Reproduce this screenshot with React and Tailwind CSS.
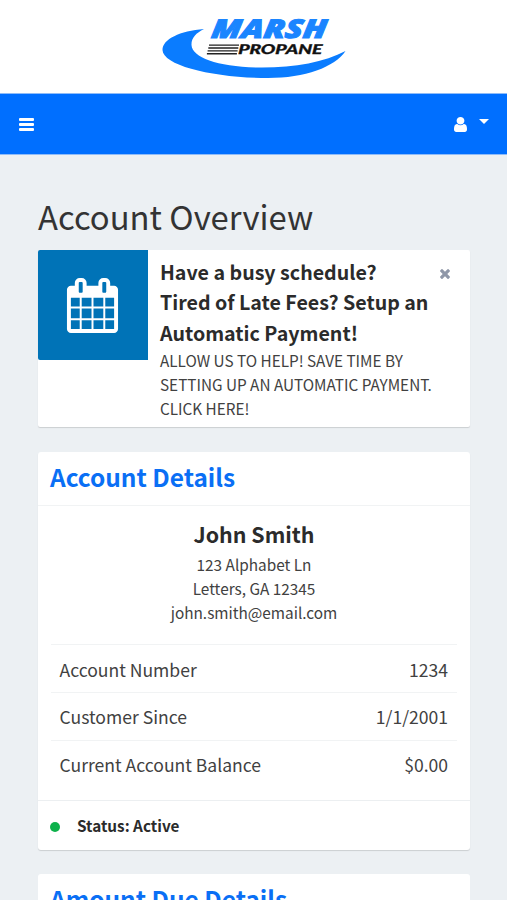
import React from 'react'

const DETAILS = [
  { label: 'Account Number', value: '1234' },
  { label: 'Customer Since', value: '1/1/2001' },
  { label: 'Current Account Balance', value: '$0.00' },
]

function Logo() {
  return (
    <svg width="190" height="76" viewBox="160 5 190 76" className="overflow-visible" aria-label="Marsh Propane">
      <path
        fill="#0a7cff"
        d="M204 29C180 31 162.500 39 162.500 50C163 66 215 78 268 78C305 78 335 67 345.500 51C325 62 295 67.500 262 67.500C220 67.500 192 58 191.500 45C191.300 38 196 33 204 29Z"
      />
      <g transform="translate(210.500 38.300) skewX(-8)">
        <text textLength="115" lengthAdjust="spacingAndGlyphs" fill="#1a85ff" stroke="#1a85ff" strokeWidth="1" className="font-['Open_Sans'] text-[26px] font-extrabold italic">MARSH</text>
      </g>
      <g transform="translate(238 54.300) skewX(-4)">
        <text textLength="84" lengthAdjust="spacingAndGlyphs" fill="#111" stroke="#111" strokeWidth="0.300" className="font-[Lato] text-[13.500px] font-black italic">PROPANE</text>
      </g>
      <path stroke="#222" strokeWidth="1.400" d="M209 45.100h30M208.300 48h30M207.600 50.900h30M206.900 53.800h30" />
    </svg>
  )
}

function UserIcon() {
  return (
    <svg width="13" height="15" viewBox="0 128 1280 1536" preserveAspectRatio="none" fill="currentColor">
      <path d="M1280 1399q0 109-62.500 187t-150.500 78h-854q-88 0-150.500-78t-62.500-187q0-85 8.500-160.500t31.500-152 58.500-131 94-89 134.500-34.500q131 128 313 128t313-128q76 0 134.500 34.500t94 89 58.500 131 31.500 152 8.500 160.500zm-256-887q0 159-112.500 271.500t-271.500 112.500-271.500-112.500-112.500-271.500 112.500-271.500 271.500-112.500 271.500 112.500 112.500 271.500z" />
    </svg>
  )
}

function CalendarIcon() {
  return (
    <svg width="55" height="55" viewBox="0 0 1792 1792" fill="currentColor">
      <path d="M192 1664h288v-288h-288v288zm352 0h320v-288h-320v288zm-352-352h288v-320h-288v320zm352 0h320v-320h-320v320zm-352-384h288v-288h-288v288zm736 736h320v-288h-320v288zm-384-736h320v-288h-320v288zm768 736h288v-288h-288v288zm-384-352h320v-320h-320v320zm-352-864v-288q0-13-9.500-22.500t-22.500-9.500h-64q-13 0-22.500 9.500t-9.500 22.500v288q0 13 9.500 22.500t22.500 9.500h64q13 0 22.500-9.500t9.500-22.500zm736 864h288v-320h-288v320zm-384-384h320v-288h-320v288zm384 0h288v-288h-288v288zm32-480v-288q0-13-9.500-22.500t-22.500-9.500h-64q-13 0-22.500 9.500t-9.500 22.500v288q0 13 9.500 22.500t22.500 9.500h64q13 0 22.500-9.500t9.500-22.500zm384-64v1280q0 52-38 90t-90 38h-1408q-52 0-90-38t-38-90v-1280q0-52 38-90t90-38h128v-96q0-66 47-113t113-47h64q66 0 113 47t47 113v96h384v-96q0-66 47-113t113-47h64q66 0 113 47t47 113v96h128q52 0 90 38t38 90z" />
    </svg>
  )
}

function CloseIcon() {
  return (
    <svg width="10" height="10" viewBox="302 366 1188 1188" fill="currentColor">
      <path d="M1490 1322q0 40-28 68l-136 136q-28 28-68 28t-68-28l-294-294-294 294q-28 28-68 28t-68-28l-136-136q-28-28-28-68t28-68l294-294-294-294q-28-28-28-68t28-68l136-136q28-28 68-28t68 28l294 294 294-294q28-28 68-28t68 28l136 136q28 28 28 68t-28 68l-294 294 294 294q28 28 28 68z" />
    </svg>
  )
}

function Navbar() {
  return (
    <nav className="flex h-[62px] items-start justify-between border-y border-[#8fbcf8] bg-[#006fff] pr-[18px] pl-[19px] text-white">
      <button className="mt-[24px] flex w-[15px] flex-col gap-[2px]" aria-label="Toggle navigation">
        <span className="h-[3px] w-full rounded-[1px] bg-white" />
        <span className="h-[3px] w-full rounded-[1px] bg-white" />
        <span className="h-[3px] w-full rounded-[1px] bg-white" />
      </button>
      <button className="mt-[23px] flex items-start gap-3" aria-label="User menu">
        <UserIcon />
        <svg width="10" height="5" viewBox="0 0 10 5" className="mt-[2px]" fill="currentColor">
          <path d="M0 0h10L5 5z" />
        </svg>
      </button>
    </nav>
  )
}

function Notice() {
  return (
    <div className="flex h-[177px] rounded-[2px] bg-white shadow-[0_1px_1px_rgba(0,0,0,0.14)]">
      <div className="flex h-[110px] w-[110px] shrink-0 items-center justify-center rounded-l-[2px] bg-[#0073b7] pr-px text-white">
        <CalendarIcon />
      </div>
      <div className="min-w-0 flex-1 pt-[6.500px] pl-3">
        <h2 className="text-[19.640px] leading-[30.500px] font-bold whitespace-nowrap text-[#2b2b2b]">
          Have a busy schedule?<br />
          Tired of Late Fees? Setup an<br />
          Automatic Payment!
        </h2>
        <p className="-mt-[0.500px] text-[15.300px] leading-[24.400px] whitespace-nowrap">
          ALLOW US TO HELP! SAVE TIME BY<br />
          SETTING UP AN AUTOMATIC PAYMENT.<br />
          CLICK HERE!
        </p>
      </div>
      <button className="mt-[19px] mr-[20px] -ml-10 h-[10px] text-[#8f97a8]" aria-label="Close">
        <CloseIcon />
      </button>
    </div>
  )
}

function AccountDetails() {
  return (
    <section className="mt-[25px] flex h-[398px] flex-col rounded-[3px] bg-white shadow-[0_1px_1px_rgba(0,0,0,0.14)]">
      <h2 className="h-[54px] border-b border-[#f1f3f4] pl-3 text-[24.450px] leading-[50px] font-bold text-[#0a6ff5]">Account Details</h2>
      <div className="flex-1 px-[13px] text-center">
        <h3 className="mt-[12px] text-[21.400px] leading-[32px] font-bold text-[#2b2b2b]">John Smith</h3>
        <p className="mt-[1.500px] text-[15.350px] leading-[24.400px]">
          123 Alphabet Ln<br />
          Letters, GA 12345<br />
          john.smith@email.com
        </p>
        <dl className="mt-[19.500px]">
          {DETAILS.map(row => (
            <div key={row.label} className="flex h-[47.700px] items-center justify-between border-t border-[#f1f3f4] pt-[2.500px] pr-[9px] pl-[8.500px] text-[17.560px]">
              <dt>{row.label}</dt>
              <dd>{row.value}</dd>
            </div>
          ))}
        </dl>
      </div>
      <div className="flex h-[50px] items-center border-t border-[#eceff1] pl-3 text-[15.300px] font-bold text-[#2b2b2b]">
        <span className="mt-[2px] mr-[17px] h-[10px] w-[10px] rounded-full bg-[#0db14b]" />
        Status: Active
      </div>
    </section>
  )
}

export default function App() {
  return (
    <div className="h-[900px] w-[507px] overflow-hidden bg-[#ecf0f3] font-['Noto_Sans_CJK_JP','Noto_Sans',sans-serif] text-[#414141]">
      <header className="flex h-[93px] justify-center bg-white pt-[5px] pl-[3px]">
        <Logo />
      </header>
      <Navbar />
      <main className="pr-[37px] pl-[38px]">
        <h1 className="mt-[37px] mb-[10px] text-[32.800px] leading-[48px] whitespace-nowrap text-[#333]">Account Overview</h1>
        <Notice />
        <AccountDetails />
        <section className="mt-6 h-20 rounded-[3px] bg-white">
          <h2 className="h-[26px] overflow-hidden pl-3 text-[24.450px] leading-[50px] font-bold text-[#0a6ff5]">Amount Due Details</h2>
        </section>
      </main>
    </div>
  )
}
